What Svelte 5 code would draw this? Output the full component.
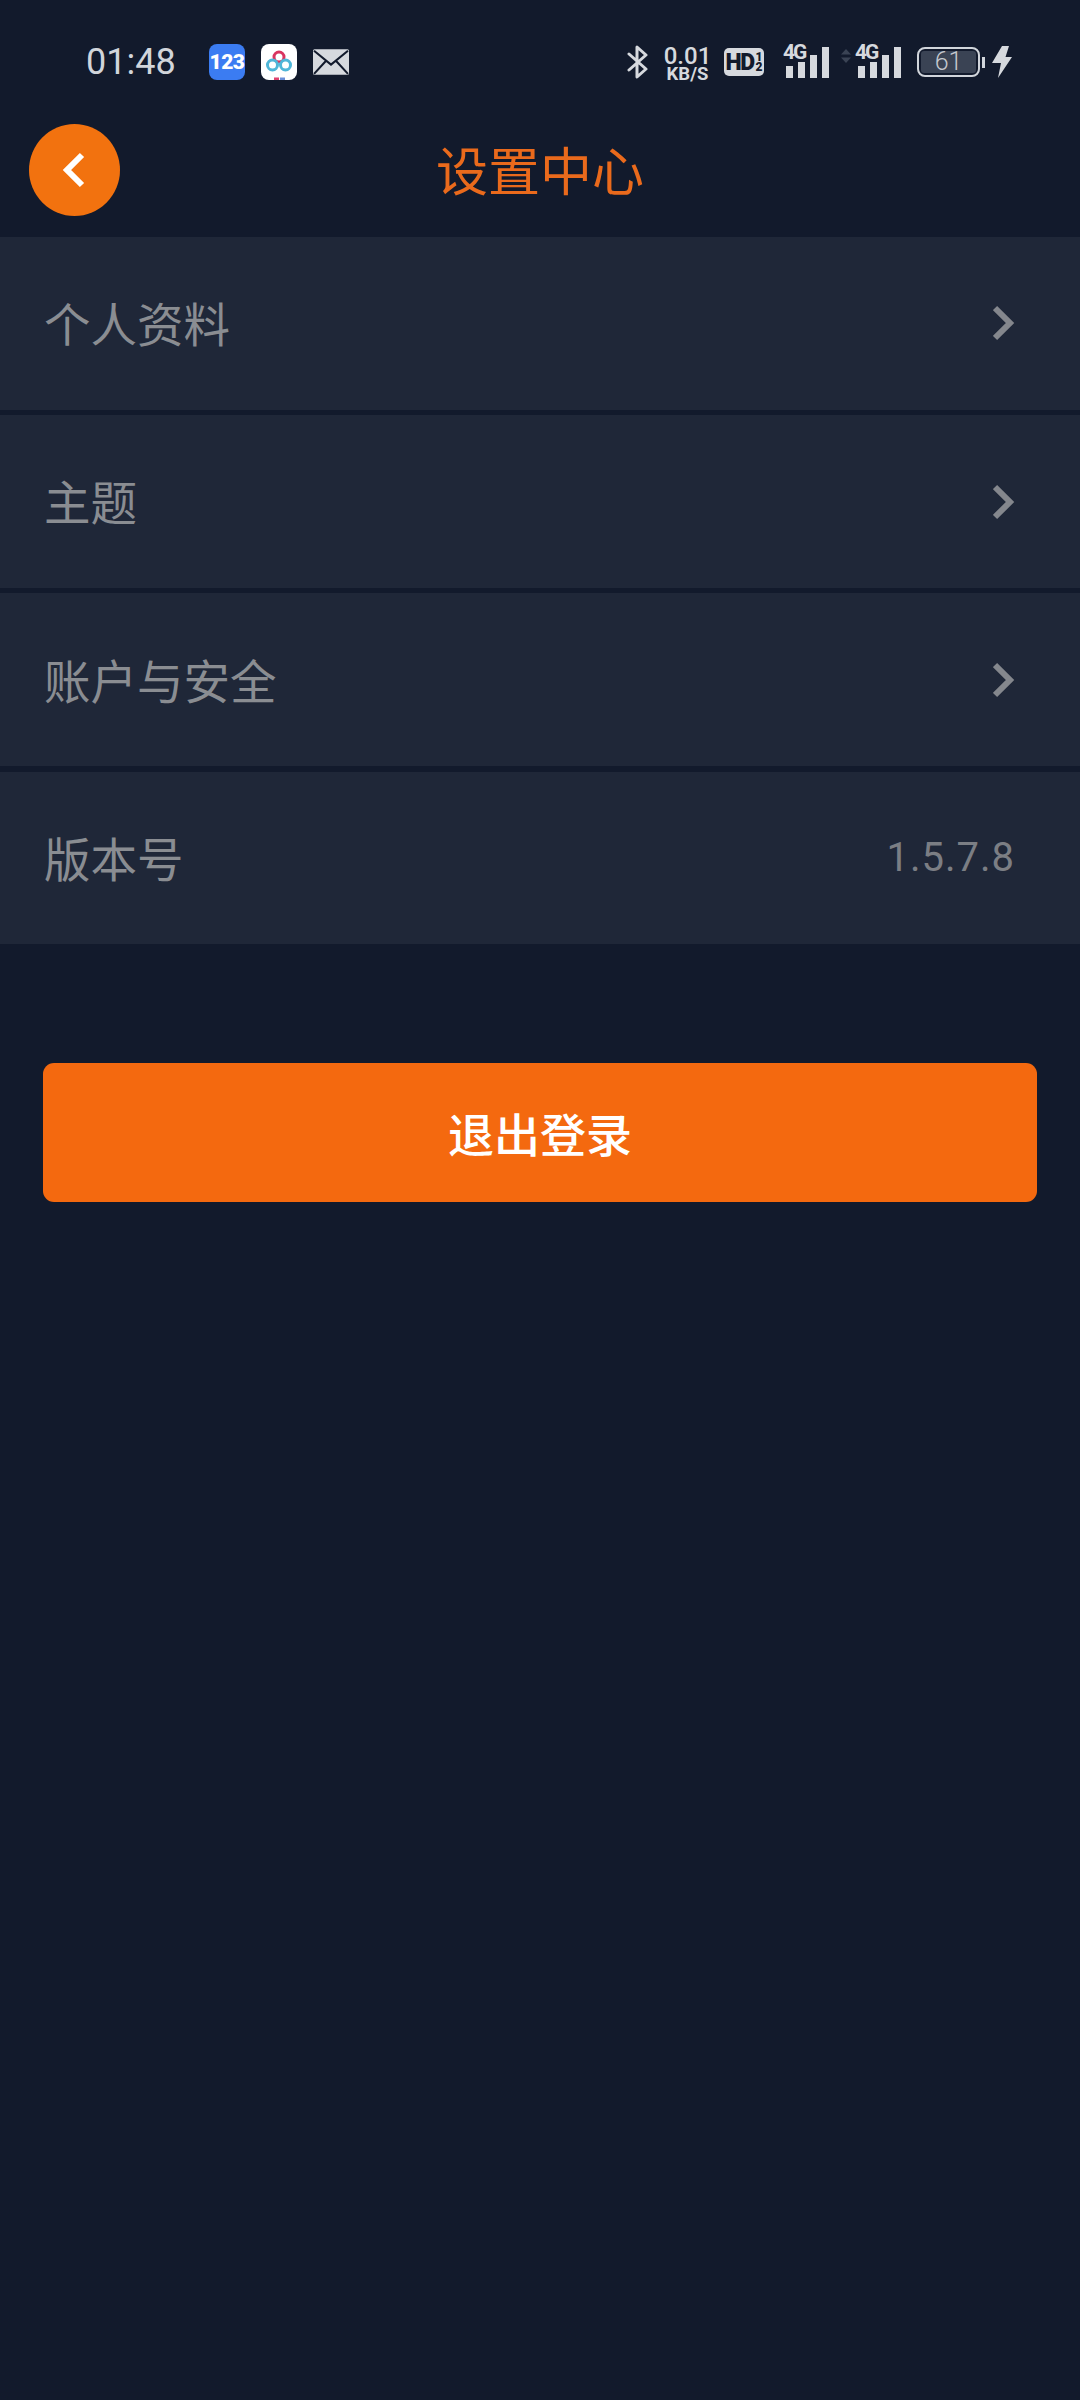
<script>
  const rows = [
    { label: '个人资料', arrow: true },
    { label: '主题', arrow: true },
    { label: '账户与安全', arrow: true },
    { label: '版本号', value: '1.5.7.8' }
  ];
</script>

<div class="page">
  <div class="status">
    <div class="left">
      <span class="time">01:48</span>
      <span class="app blue">123</span>
      <span class="app white">
        <svg viewBox="0 0 34 36" width="36" height="36">
          <circle cx="17" cy="13" r="5" fill="none" stroke="#d9345f" stroke-width="3"/>
          <circle cx="10.5" cy="21" r="5" fill="none" stroke="#4fb6d8" stroke-width="3"/>
          <circle cx="23.5" cy="21" r="5" fill="none" stroke="#4fb6d8" stroke-width="3"/>
          <rect x="12" y="33.5" width="5" height="2.5" fill="#e0426e"/>
          <rect x="18" y="33.5" width="5" height="2.5" fill="#6a8fd8"/>
        </svg>
      </span>
      <svg class="mail" viewBox="0 0 35 25" width="36" height="26">
        <rect width="35" height="25" rx="1.5" fill="#d6d9de"/>
        <path d="M1 1.500 L17.500 15 L34 1.500 M1 24 L12.500 11.500 M34 24 L22.500 11.500" fill="none" stroke="#121a2c" stroke-width="2"/>
      </svg>
    </div>
    <div class="right">
      <svg class="bt" viewBox="0 0 22 34" width="22" height="34">
        <path d="M2 9 L19 24 L10 32 L10 2 L19 10 L2 25" fill="none" stroke="#d6d9de" stroke-width="3" stroke-linejoin="round" stroke-linecap="round"/>
      </svg>
      <div class="speed"><span class="s1">0.01</span><span class="s2">KB/S</span></div>
      <div class="hd"><span>HD</span><span class="frac"><i>1</i><i>2</i></span></div>
      <div class="sim first">
        <span class="g">4G</span>
        <svg viewBox="0 0 46 32" width="46" height="32">
          <rect x="3" y="20" width="7" height="12" fill="#d6d9de"/>
          <rect x="15" y="16" width="7" height="16" fill="#d6d9de"/>
          <rect x="27" y="9" width="7" height="23" fill="#d6d9de"/>
          <rect x="39" y="1" width="7" height="31" fill="#d6d9de"/>
        </svg>
      </div>
      <svg class="arrows" viewBox="0 0 10 14" width="10" height="14">
        <path d="M5 0 L10 5.500 H0 Z M5 14 L10 8.500 H0 Z" fill="#3a4354"/>
      </svg>
      <div class="sim">
        <span class="g">4G</span>
        <svg viewBox="0 0 46 32" width="46" height="32">
          <rect x="3" y="20" width="7" height="12" fill="#d6d9de"/>
          <rect x="15" y="16" width="7" height="16" fill="#d6d9de"/>
          <rect x="27" y="9" width="7" height="23" fill="#d6d9de"/>
          <rect x="39" y="1" width="7" height="31" fill="#d6d9de"/>
        </svg>
      </div>
      <div class="battery"><div class="cell"><span class="fill">61</span></div><span class="tip"></span></div>
      <svg class="bolt" viewBox="0 0 20 32" width="20" height="32">
        <path d="M10 0 H17 L13.500 11 H20 L6 32 L9 17 H0 Z" fill="#d6d9de"/>
      </svg>
    </div>
  </div>

  <header class="nav">
    <button class="back" aria-label="返回">
      <svg viewBox="0 0 24 36" width="24" height="36">
        <path d="M20 3 L5 18 L20 33" fill="none" stroke="#fff" stroke-width="6"/>
      </svg>
    </button>
    <h1>设置中心</h1>
  </header>

  <div class="list">
    {#each rows as row}
      <div class="row">
        <span class="label">{row.label}</span>
        {#if row.arrow}
          <svg class="chev" viewBox="0 0 22 36" width="22" height="36">
            <path d="M2 3 L17 18 L2 33" fill="none" stroke="#84878d" stroke-width="6"/>
          </svg>
        {:else}
          <span class="value">{row.value}</span>
        {/if}
      </div>
    {/each}
  </div>

  <button class="logout">退出登录</button>
</div>

<style>
  :global(body) { margin: 0; background: #121a2c; }
  .page {
    width: 1080px;
    height: 2400px;
    background: #121a2c;
    font-family: "Noto Sans CJK SC", "Noto Sans", sans-serif;
    overflow: hidden;
  }
  .status {
    height: 124px;
    display: flex;
    justify-content: space-between;
    align-items: center;
    padding: 0 68px 0 86px;
    box-sizing: border-box;
    color: #d6d9de;
    font-family: Roboto, sans-serif;
  }
  .left, .right { display: flex; align-items: center; }
  .time { font-size: 36px; width: 123px; color: #d1d5db; line-height: 1; }
  .app {
    width: 36px; height: 36px; border-radius: 8px; margin-right: 16px;
    display: flex; align-items: center; justify-content: center;
  }
  .blue { background: #3b7cf2; color: #fff; font-weight: 900; font-size: 21px; letter-spacing: -0.5px; }
  .white { background: #fff; overflow: hidden; }
  .bt { margin-right: 15px; }
  .speed { display: flex; flex-direction: column; align-items: center; width: 47px; margin-right: 13px; font-weight: 700; line-height: 1; }
  .s1 { font-size: 24px; height: 21px; font-weight: 500; }
  .s2 { font-size: 18.500px; height: 16px; }
  .hd {
    width: 40px; height: 28px; border-radius: 5px; background: #d6d9de; color: #121a2c;
    font-weight: 900; font-size: 23px; display: flex; align-items: center; justify-content: center;
    margin-right: 19px; letter-spacing: -1.500px;
  }
  .frac { display: flex; flex-direction: column; font-size: 12px; line-height: 10px; margin-left: 2px; letter-spacing: 0; }
  .frac i { font-style: normal; }
  .sim { position: relative; width: 46px; height: 32px; }
  .sim svg { display: block; }
  .sim.first { margin-right: 12px; }
  .g { position: absolute; left: 0; top: -4px; font-size: 21px; font-weight: 700; letter-spacing: -2px; line-height: 1; color: #d6d9de; }
  .arrows { margin-right: 4px; margin-top: -12px; }
  .battery { display: flex; align-items: center; margin-left: 16px; margin-right: 7px; }
  .cell {
    width: 63px; height: 30px; box-sizing: border-box; border: 2.500px solid #d1d5db; border-radius: 8px;
    padding: 2px; display: flex;
  }
  .fill {
    flex: 1; background: #3a4354; border-radius: 3px; color: #c4c8ce;
    font-size: 25px; font-weight: 300; line-height: 21px; text-align: center;
  }
  .tip { width: 3px; height: 11px; background: #d1d5db; margin-left: 2px; }
  .nav {
    height: 113px;
    position: relative;
    display: flex;
    align-items: center;
    justify-content: center;
  }
  .back {
    position: absolute; left: 29px; top: 0;
    width: 91px; height: 92px; border-radius: 50%;
    background: #f2720f; border: 0; padding: 0;
    display: flex; align-items: center; justify-content: center;
  }
  .back svg { margin-left: -2px; }
  h1 {
    margin: 0; font-size: 52px; font-weight: 400; color: #ea6a1c; line-height: 1;
    transform: translateY(-12px);
  }
  .list { display: flex; flex-direction: column; gap: 5.4px; }
  .row {
    height: 172.800px;
    background: #1f2738;
    display: flex;
    align-items: center;
    justify-content: space-between;
    padding: 0 66px 0 44px;
    box-sizing: border-box;
  }
  .label { font-size: 46.500px; color: #8a8d92; line-height: 1; transform: translateY(-1px); }
  .chev { margin-right: -1px; }
  .value { font-family: Roboto, sans-serif; font-size: 40px; letter-spacing: 1px; color: #7b7e84; margin-right: -1px; }
  .logout {
    display: block;
    margin: 118.500px 43px 0;
    width: 994px;
    height: 139px;
    border: 0;
    border-radius: 11px;
    background: #f4690f;
    color: #fff;
    font-family: inherit;
    font-size: 46px;
    font-weight: 500;
    padding: 0;
  }
</style>
